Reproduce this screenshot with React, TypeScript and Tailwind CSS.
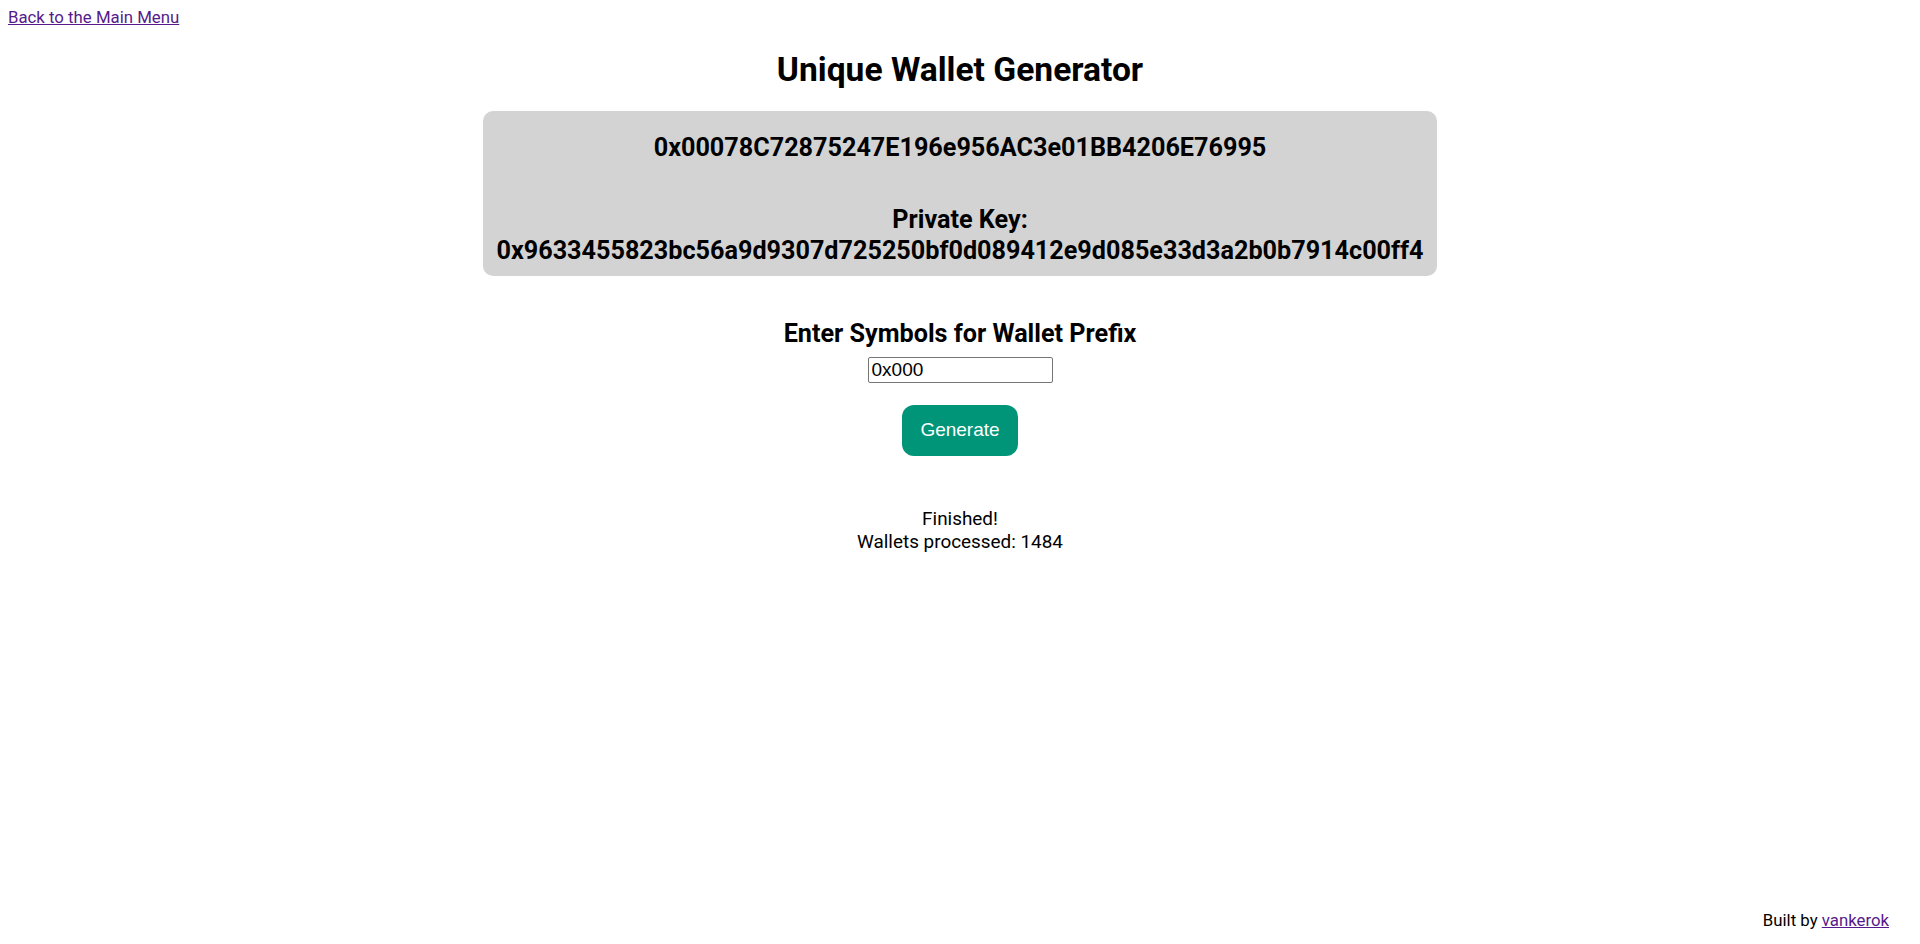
import { useState } from "react";

const address = "0x00078C72875247E196e956AC3e01BB4206E76995";
const privateKey = "0x9633455823bc56a9d9307d725250bf0d089412e9d085e33d3a2b0b7914c00ff4";

const App = () => {
    const [prefix, setPrefix] = useState<string>("0x000");

    return (
        <div className="h-[944px] flex flex-col bg-white text-black text-[16.8px] font-['Roboto',sans-serif]">
            <div className="px-2 pt-[5px]">
                <a href="#" className="text-[16.8px] leading-[20px] text-[#551a8b] underline">Back to the Main Menu</a>
            </div>

            <div className="flex flex-col items-center">
                <h1 className="mt-[20px] text-[33.6px] leading-[40px] font-bold">Unique Wallet Generator</h1>

                <div className="mt-[21px] bg-[#d3d3d3] rounded-[10px] px-[13px] pt-[22px] pb-[10px] flex flex-col items-center text-[25.2px] leading-[30px] font-bold">
                    <div>{address}</div>
                    <div className="mt-[42px]">Private Key:</div>
                    <div className="mt-[1px]">{privateKey}</div>
                </div>

                <h2 className="mt-[43px] text-[25.2px] leading-[30px] font-bold">Enter Symbols for Wallet Prefix</h2>
                <input
                    value={prefix}
                    onChange={(e) => setPrefix(e.target.value)}
                    className="mt-[8px] w-[185px] h-[26px] px-[3px] border border-[#767676] rounded-[2px] text-[19px] font-['Liberation_Sans',Arial,sans-serif] outline-none"
                />
                <button className="mt-[22px] w-[116px] h-[51px] rounded-[12px] bg-[#009578] text-white text-[19px] font-['Liberation_Sans',Arial,sans-serif]">
                    Generate
                </button>

                <div className="mt-[51px] text-[18.9px] leading-[23px] text-center">
                    <div>Finished!</div>
                    <div>Wallets processed: 1484</div>
                </div>
            </div>

            <div className="mt-auto flex justify-end pr-[31px] pb-[14px] text-[16.8px] leading-[20px]">
                <span>Built by <a href="#" className="text-[#551a8b] underline">vankerok</a></span>
            </div>
        </div>
    );
};

export default App;
